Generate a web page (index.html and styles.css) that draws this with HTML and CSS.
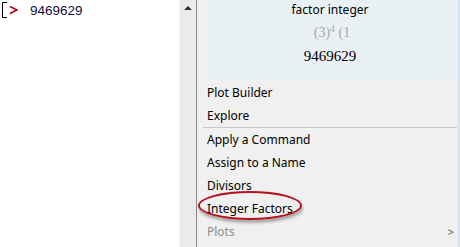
FILE: index.html
```html
<!DOCTYPE html>
<html lang="en">
<head>
  <meta charset="UTF-8">
  <title>Context menu</title>
  <link rel="stylesheet" href="styles.css">
</head>
<body>
  <!-- Worksheet -->
  <div class="sheet">
    <div class="group">
      <svg class="prompt" width="22" height="20" viewBox="0 0 22 20">
        <path d="M7 2.5H2.5V17.5H7" fill="none" stroke="#000" stroke-width="1"/>
        <path d="M10 6.5L17 10L10 13.5" fill="none" stroke="#a00010" stroke-width="1.4"/>
      </svg>
      <span class="input">9469629</span>
    </div>
  </div>

  <!-- Scrollbar -->
  <div class="scrollbar">
    <span class="arrow-up"></span>
  </div>

  <!-- Context menu -->
  <div class="menu">
    <div class="preview">
      <div class="preview-title">factor integer</div>
      <div class="preview-math">(3)<sup>4</sup> (1</div>
      <div class="preview-value">9469629</div>
    </div>
    <div class="item">Plot Builder</div>
    <div class="item">Explore</div>
    <div class="separator"></div>
    <div class="item">Apply a Command</div>
    <div class="item">Assign to a Name</div>
    <div class="item">Divisors</div>
    <div class="item highlight">Integer Factors<span class="ring"></span></div>
    <div class="item disabled">Plots<span class="submenu">&gt;</span></div>
  </div>
</body>
</html>
```

FILE: styles.css
```css
/* Base */
* {
  margin: 0;
  padding: 0;
  box-sizing: border-box;
}

body {
  width: 460px;
  height: 247px;
  overflow: hidden;
  display: flex;
  background-color: #fff;
  font-family: "Noto Sans", "Open Sans", sans-serif;
}

/* Worksheet */
.sheet {
  width: 179px;
  background-color: #fff;
}

.group {
  display: flex;
  align-items: center;
  height: 20px;
}

.prompt {
  display: block;
  margin-right: 8px;
}

.input {
  font-family: "Liberation Sans", Arial, sans-serif;
  font-size: 13.5px;
  color: #101040;
}

/* Scrollbar */
.scrollbar {
  width: 17px;
  background-color: #ebebeb;
  border-left: 1px solid #f4f4f4;
  display: flex;
  justify-content: center;
  padding-top: 6px;
}

.arrow-up {
  width: 0;
  height: 0;
  border-left: 4px solid transparent;
  border-right: 4px solid transparent;
  border-bottom: 4px solid #333;
}

/* Menu */
.menu {
  flex: 1;
  background-color: #f0f0f0;
  border-left: 1px solid #8a8a8a;
  border-right: 2px solid #d6e3f3;
  padding: 0 1px 0 6px;
  display: flex;
  flex-direction: column;
}

.preview {
  height: 80px;
  margin-bottom: 1px;
  background-color: #e9f1f5;
  display: flex;
  flex-direction: column;
  align-items: center;
}

.preview-title {
  font-size: 12px;
  line-height: 16px;
  margin-top: 2px;
  color: #000;
}

.preview-math {
  font-family: "Liberation Serif", serif;
  font-size: 14px;
  line-height: 16px;
  margin-top: 7px;
  margin-left: 4px;
  color: #a8a8a8;
}

.preview-math sup {
  font-size: 10px;
  vertical-align: 5px;
  line-height: 0;
}

.preview-value {
  font-family: "Liberation Serif", serif;
  font-size: 15px;
  line-height: 18px;
  margin-top: 6px;
  color: #000;
}

.item {
  position: relative;
  height: 23px;
  line-height: 23px;
  padding-left: 4px;
  font-size: 12px;
  color: #000;
}

.separator {
  height: 1px;
  background-color: #c8c8c8;
}

.item.disabled {
  color: #8d8d8d;
}

.submenu {
  position: absolute;
  right: 3px;
  top: 0;
  color: #555;
  font-size: 11px;
}

/* Hand-drawn highlight */
.ring {
  position: absolute;
  left: -5px;
  top: -6px;
  width: 104px;
  height: 29px;
  border: 2px solid #b3121e;
  border-radius: 50%;
  box-shadow: 1px 3px 3px rgba(0, 0, 0, 0.3);
}
```
